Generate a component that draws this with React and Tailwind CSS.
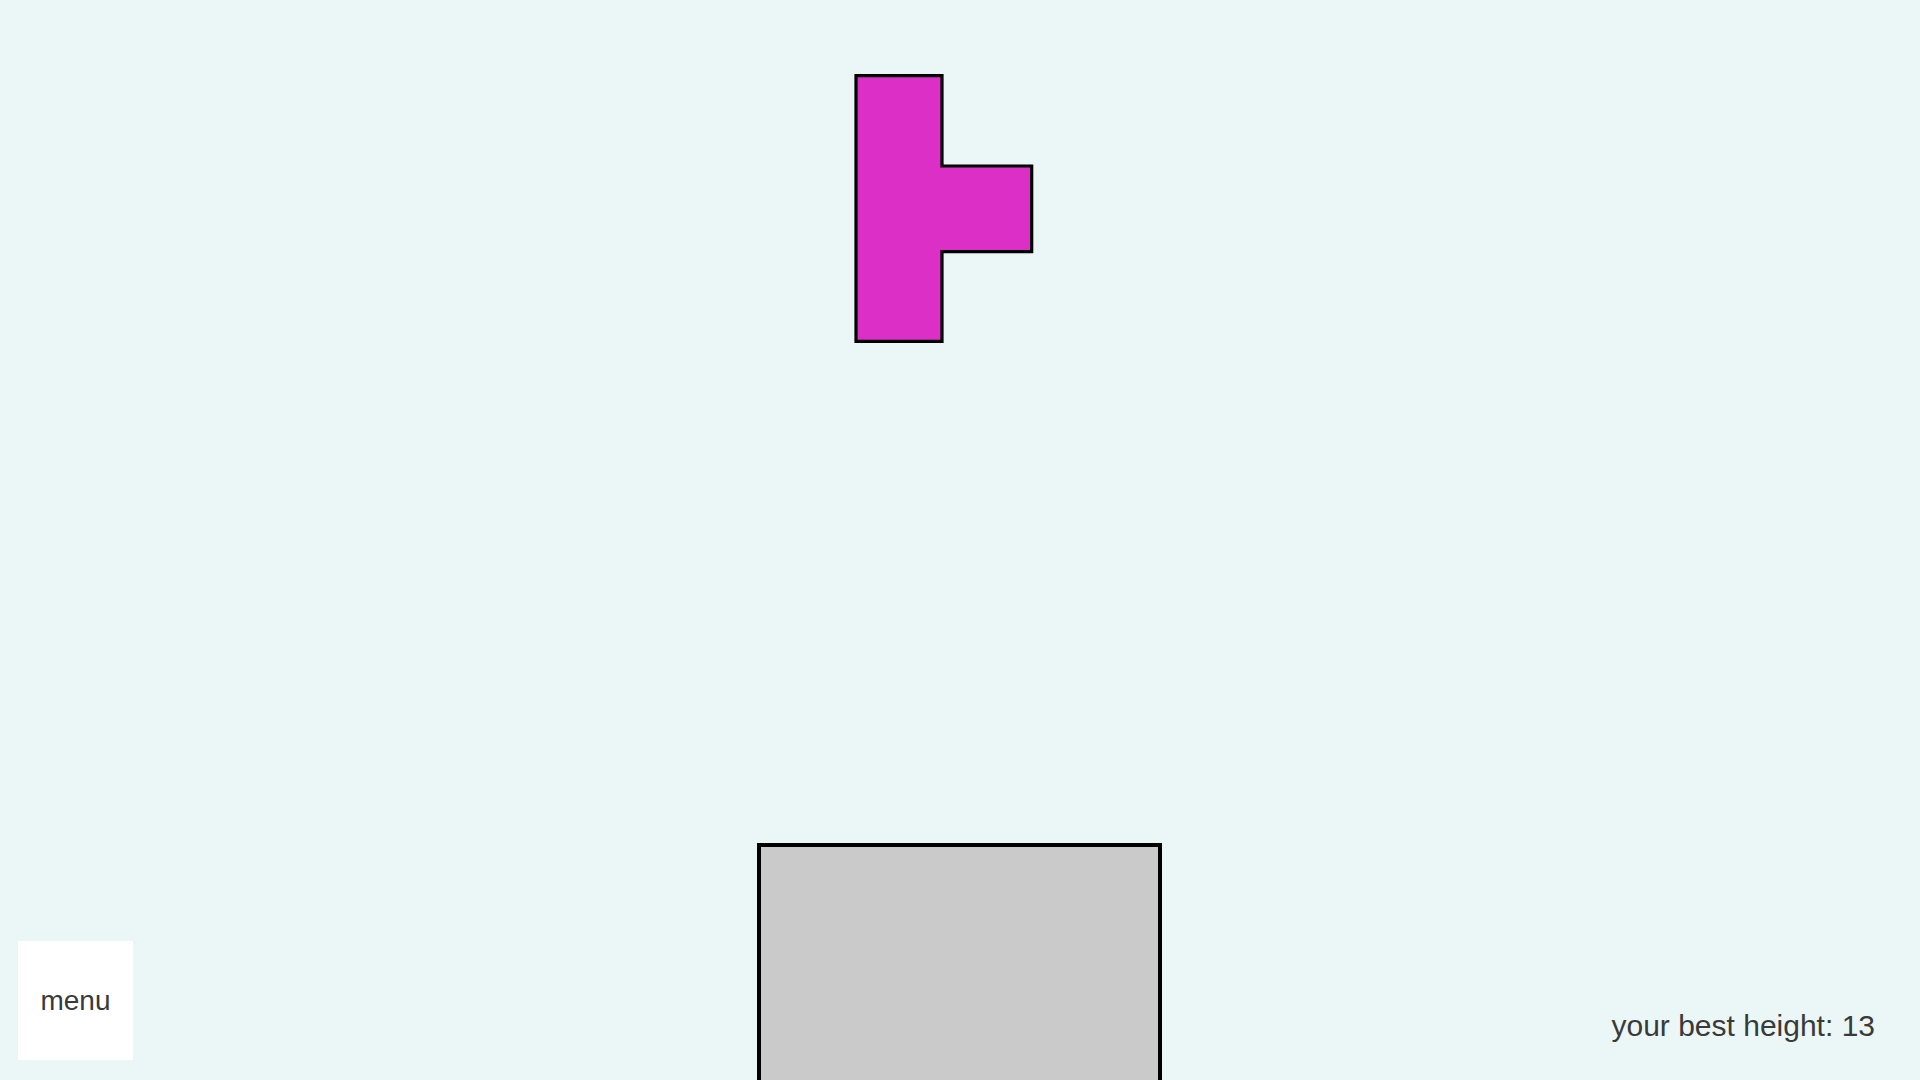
export default function App() {
  return (
    <div className="relative w-full h-screen overflow-hidden bg-[#ebf7f7]" style={{ fontFamily: '"Liberation Sans", Arial, sans-serif' }}>
      <svg className="absolute left-0 top-0" width="1920" height="1080" viewBox="0 0 1920 1080">
        <path
          d="M856 75.7 H942 V166 H1031.7 V251.7 H942 V341.3 H856 Z"
          fill="#dc2fc6"
          stroke="#000"
          strokeWidth="3.2"
          strokeLinejoin="miter"
        />
      </svg>
      <div className="absolute bottom-0 left-[757px] w-[405px] h-[237px] bg-[#cacaca] border-[4px] border-b-0 border-black" />
      <button className="absolute left-[18px] top-[941px] w-[115px] h-[119px] bg-white flex items-center justify-center text-[28px] text-[#3a3a3a]">
        menu
      </button>
      <div className="absolute right-[45px] top-[1011px] text-[30px] leading-none text-[#3a3a3a]">
        your best height: 13
      </div>
    </div>
  );
}
